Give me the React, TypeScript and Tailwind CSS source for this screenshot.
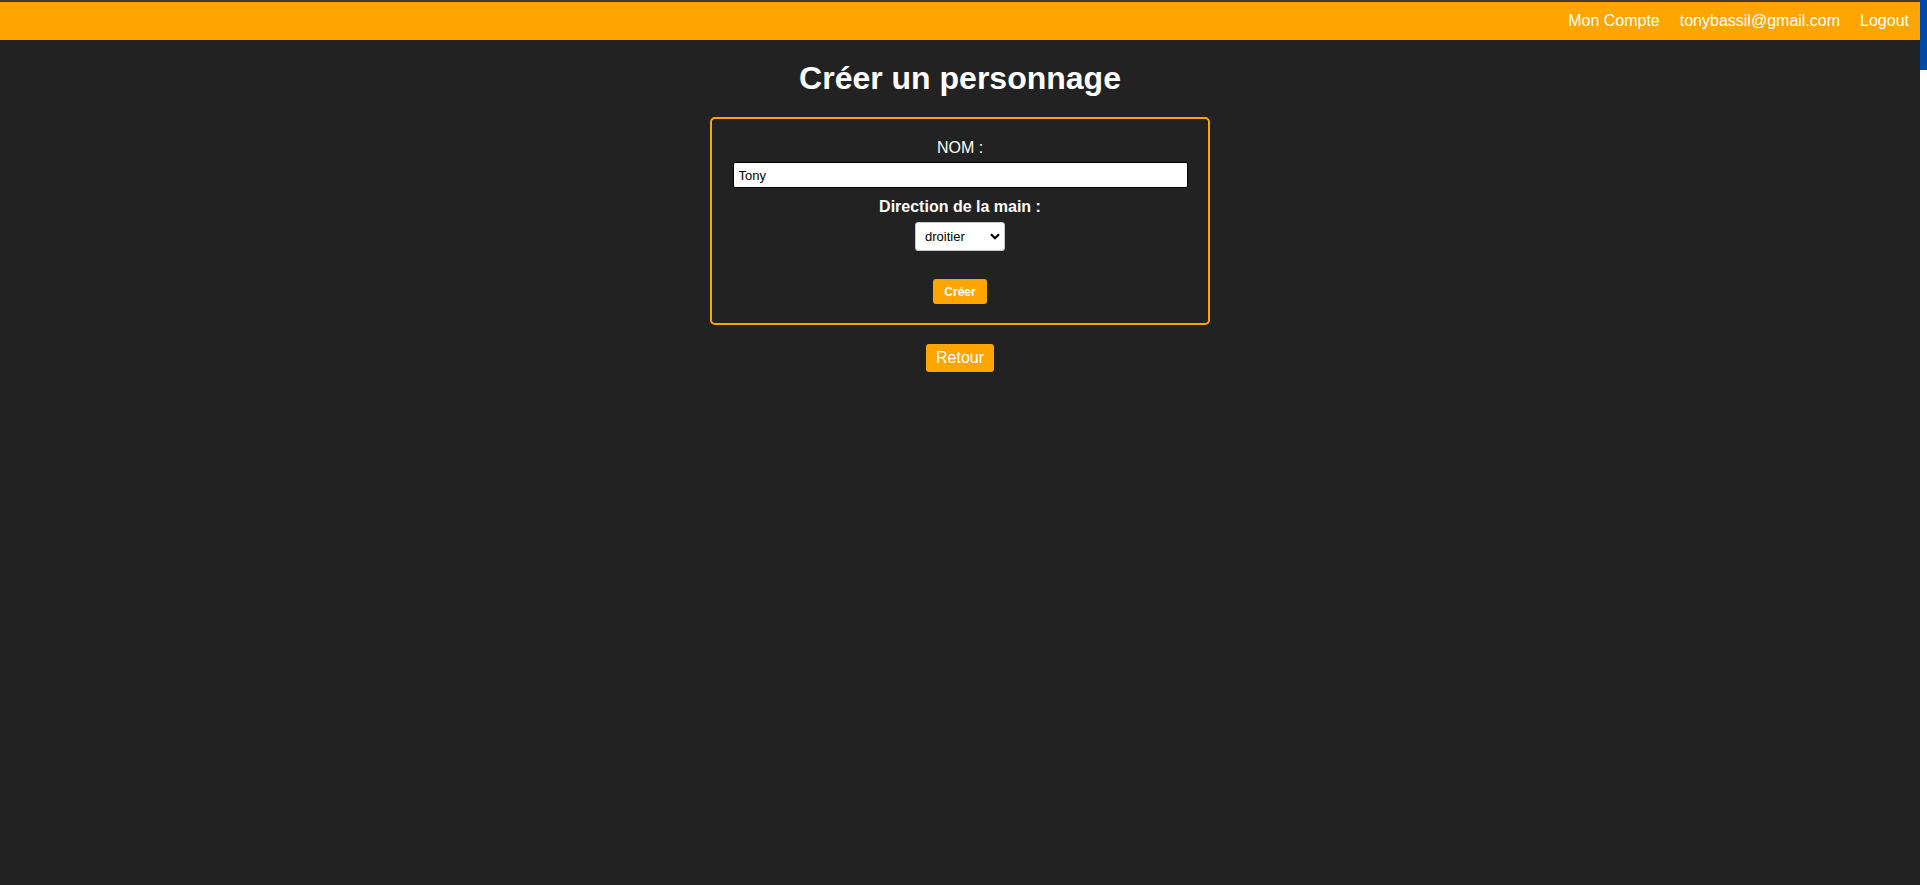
import React from "react";

export default function App() {
  return (
    <div
      className="flex min-h-[885px] w-full bg-[#222222] text-white"
      style={{ fontFamily: '"Liberation Sans", Arial, sans-serif' }}
    >
      <div className="flex-1 flex flex-col">
        <header className="h-[40px] border-t-2 border-[#3c3c3c] bg-[#FFA500] flex items-center justify-end pr-[11px] gap-[20px] text-[16px] leading-[18px]">
          <a className="text-white">Mon Compte</a>
          <a className="text-white">tonybassil@gmail.com</a>
          <a className="text-white">Logout</a>
        </header>
        <main className="flex flex-col items-center">
          <h1 className="mt-[20px] text-[32px] leading-[37px] font-bold">Créer un personnage</h1>
          <form
            className="mt-[20px] w-[500px] border-2 border-[#FFA500] rounded-[5px] px-[20px] pt-[20px] pb-[19px] flex flex-col items-center"
            onSubmit={(e) => e.preventDefault()}
          >
            <label className="text-[16px] leading-[18px]">NOM :</label>
            <input
              defaultValue="Tony"
              className="mt-[5px] w-[455px] h-[26px] bg-white text-black border border-black rounded-[2px] px-[5px] text-[13px] outline-none"
              style={{ fontFamily: '"Liberation Sans", Arial, sans-serif' }}
            />
            <label className="mt-[10px] text-[16px] leading-[18px] font-bold">Direction de la main :</label>
            <div className="relative mt-[6px] w-[90px] h-[29px]">
              <select
                defaultValue="droitier"
                className="appearance-none w-full h-full bg-white text-black border border-[#c8c8c8] rounded-[3px] pl-[9px] text-[13px] outline-none"
                style={{ fontFamily: '"Liberation Sans", Arial, sans-serif' }}
              >
                <option value="droitier">droitier</option>
                <option value="gaucher">gaucher</option>
              </select>
              <svg
                className="pointer-events-none absolute right-[5px] top-[11px]"
                width="10"
                height="7"
                viewBox="0 0 10 7"
              >
                <path d="M1 1.2 L5 5.2 L9 1.2" fill="none" stroke="#000" strokeWidth="2.2" />
              </svg>
            </div>
            <button
              type="submit"
              className="mt-[28px] w-[54px] h-[25px] bg-[#FFA500] text-white rounded-[3px] text-[12px] font-bold leading-none"
            >
              Créer
            </button>
          </form>
          <button className="mt-[19px] h-[28px] px-[10px] bg-[#FFA500] text-white rounded-[3px] text-[16px] leading-[18px]">
            Retour
          </button>
        </main>
      </div>
      <div className="w-[7px] flex flex-col bg-white">
        <div className="h-[70px] bg-[#0048AA]" />
      </div>
    </div>
  );
}
